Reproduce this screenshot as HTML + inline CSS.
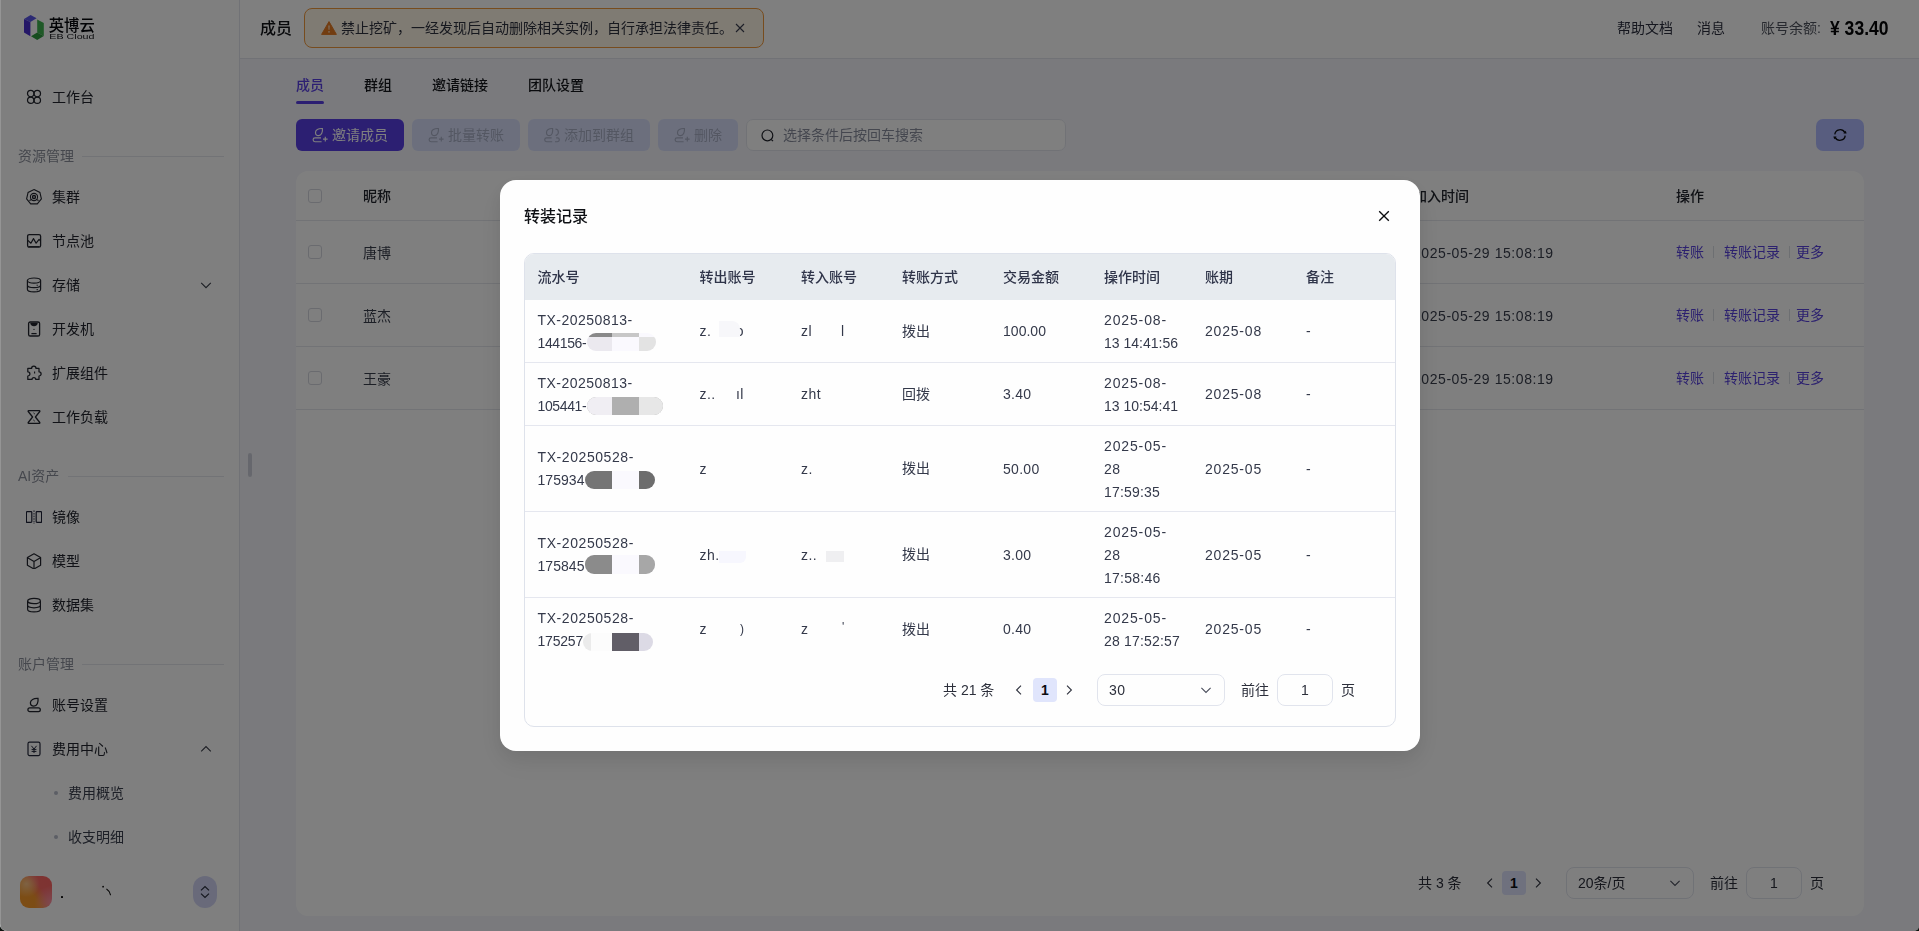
<!DOCTYPE html>
<html lang="zh-CN">
<head>
<meta charset="utf-8">
<title>成员</title>
<style>
*{box-sizing:border-box;margin:0;padding:0}
html{background:#0e130f}
html,body{width:1919px;height:931px;overflow:hidden}
body{background:#f4f5fa;border-radius:0 0 5px 7px}
body{font-family:"Liberation Sans","Noto Sans CJK SC",sans-serif;font-size:14px;color:#1d2129;position:relative}
.abs{position:absolute}
.ly{position:absolute;left:0;top:0;opacity:.999;white-space:nowrap}
#dlg{opacity:.999}
svg{display:block}
/* ---------- sidebar ---------- */
#side{position:absolute;left:0;top:0;width:240px;height:931px;background:#fff;border-right:1px solid #e3e5ec}
.mi{position:absolute;left:0;width:239px;height:40px;line-height:40px;font-size:14px;color:#23262f}
.mi .ic{position:absolute;left:26px;top:12px;width:16px;height:16px}
.mi .tx{position:absolute;left:52px;top:-.5px;white-space:nowrap}
.mi .ch{position:absolute;left:200px;top:14px;width:12px;height:12px}
.mi.sub .tx{left:68px;color:#3c4150}
.mi.sub i{position:absolute;left:54px;top:18px;width:4px;height:4px;border-radius:50%;background:#b9bdcc}
.grp{position:absolute;left:18px;height:20px;line-height:20px;font-size:14px;color:#8c909c;white-space:nowrap}
.grp b{position:absolute;top:10px;height:1px;background:#e6e8ee}
/* ---------- header ---------- */
#head{position:absolute;left:240px;top:0;width:1679px;height:59px;background:#fff;border-bottom:1px solid #e3e5ec}
/* ---------- main ---------- */
.tab{position:absolute;top:74px;height:22px;line-height:22px;font-size:14px;font-weight:500;color:#16181d;white-space:nowrap}
.btn{position:absolute;top:119px;height:32px;border-radius:6px;line-height:32px;font-size:14px;white-space:nowrap}
.btn svg{position:absolute;top:8px;width:16px;height:16px}
.btn span{position:absolute;top:0}
#card{position:absolute;left:296px;top:171px;width:1568px;height:745px;background:#fff;border-radius:12px}
.hl{position:absolute;left:0;width:1568px;height:1px;background:#e6e8ee}
.ck{position:absolute;left:12px;width:14px;height:14px;border:1px solid #d5d8e0;border-radius:3px;background:#fff}
.cell{position:absolute;white-space:nowrap;font-size:14px;height:22px;line-height:22px;color:#3a3f4d}
.lnk{color:#5a44e0}
.sep{position:absolute;width:1px;height:12px;background:#dcdfe6}
/* ---------- overlay & modal ---------- */
#mask{position:absolute;left:0;top:0;width:1919px;height:931px;background:rgba(0,0,0,.5)}
#dlg{position:absolute;left:500px;top:180px;width:920px;height:571px;background:#fff;border-radius:16px;box-shadow:0 12px 32px 4px rgba(0,0,0,.04),0 8px 20px rgba(0,0,0,.08)}
#tbl{position:absolute;left:24px;top:73px;width:872px;height:474px;border:1px solid #dfe3ec;border-radius:10px;overflow:hidden}
#tbl .th{position:absolute;left:0;top:0;width:870px;height:46px;background:#e8ecf0}
#tbl .th span{position:absolute;top:12px;height:22px;line-height:22px;font-size:14px;font-weight:500;color:#30354a;white-space:nowrap}
.r{position:absolute;left:0;width:870px;border-bottom:1px solid #e6e8f0}
.c{position:absolute;font-size:14px;line-height:23px;color:#353a4b;white-space:nowrap;letter-spacing:.45px;margin-top:1px}
.c.zh{letter-spacing:0;margin-top:0}
.blob{position:absolute}
</style>
</head>
<body>
<div id="side"><div class="ly">
<svg class="abs" style="left:0;top:0" width="120" height="56" viewBox="0 0 120 56">
<polygon points="24,19 30.6,15 36.6,18.2 30.4,22" fill="#5a56e8"/>
<polygon points="24,19 30.4,22 30.4,36.2 24,32.6" fill="#4a2fd0"/>
<polygon points="37.2,19.4 43.8,23 43.8,36 37.2,32.6" fill="#3fb34f"/>
<polygon points="31,36.2 37.2,32.6 43.8,36 37.2,40" fill="#2f9c3f"/>
<text transform="translate(48.800,31.200) scale(.935,1)" font-family="'Liberation Sans','Noto Sans CJK SC',sans-serif" font-size="16.400" font-weight="500" fill="#05070c">英博云</text>
<text transform="translate(49.300,39.100) scale(1.600,1)" font-family="'Liberation Sans',sans-serif" font-size="6.700" fill="#14161a">EB Cloud</text>
</svg>

<div class="mi" style="top:77px"><svg class="ic" viewBox="0 0 16 16" fill="none" stroke="#23262f" stroke-width="1.25"><circle cx="4.700" cy="4.600" r="3.200"/><circle cx="11.300" cy="4.600" r="3.200"/><circle cx="4.700" cy="11.200" r="3.200"/><circle cx="11.300" cy="11.200" r="3.200"/></svg><span class="tx">工作台</span></div>

<div class="grp" style="top:146px">资源管理<b style="left:64px;width:142px"></b></div>

<div class="mi" style="top:177px"><svg class="ic" viewBox="0 0 16 16" fill="none" stroke="#23262f" stroke-width="1.1"><polygon points="8,0.6 13.9,3.4 15.4,9.8 11.3,14.9 4.7,14.9 0.6,9.8 2.1,3.4"/><circle cx="8" cy="8" r="3.6"/><circle cx="8" cy="8" r="1.5" stroke-width="1.4"/><path d="M3.4 11.6 5.6 10.6M12.6 11.6 10.4 10.6"/></svg><span class="tx">集群</span></div>

<div class="mi" style="top:221px"><svg class="ic" viewBox="0 0 16 16" fill="none" stroke="#23262f" stroke-width="1.3"><rect x="1.6" y="1.6" width="13" height="12.6" rx="1.6"/><path d="M1.900 7.400 4.900 10.200 7.500 5.600 10.100 10.200 13.100 6.400 14.500 7.800" stroke-linejoin="round" stroke-width="1.200"/><path d="M2.600 13.600h10.800" stroke-width="1"/></svg><span class="tx">节点池</span></div>

<div class="mi" style="top:265px"><svg class="ic" viewBox="0 0 16 16" fill="none" stroke="#23262f" stroke-width="1.2"><ellipse cx="8" cy="3.6" rx="6.6" ry="2.6"/><path d="M1.4 3.6v8.6c0 1.5 2.9 2.7 6.6 2.7s6.600-1.200 6.600-2.700V3.600M1.400 8c0 1.500 2.900 2.700 6.600 2.700s6.600-1.200 6.600-2.700"/><path d="M10.600 8.200h1.200M10.600 12.600h1.200" stroke-width="1.1"/></svg><span class="tx">存储</span><svg class="ch" viewBox="0 0 12 12" fill="none" stroke="#3a3e4a" stroke-width="1.1"><path d="M1.200 3.800 6 8.600l4.800-4.800"/></svg></div>

<div class="mi" style="top:309px"><svg class="ic" viewBox="0 0 16 16" fill="none" stroke="#23262f" stroke-width="1.3"><rect x="2.600" y="1" width="11" height="14" rx="1.600"/><path d="M4.200 1.800h7.600c0 2.200-1.600 3.400-3.800 3.400S4.200 4 4.200 1.800z" fill="#23262f" stroke="none"/><path d="M5.400 12.600h5.200"/><circle cx="8" cy="8.400" r=".6" fill="#23262f" stroke="none"/></svg><span class="tx">开发机</span></div>

<div class="mi" style="top:353px"><svg class="ic" viewBox="0 0 16 16" fill="none" stroke="#23262f" stroke-width="1.25" stroke-linejoin="round"><path d="M5.600 3.400a2.200 2.200 0 1 1 4.400 0h3v3.400a2.100 2.100 0 1 1 0 4.200v3.400H9.800a1.900 1.900 0 1 0-3.800 0H1.800V11a2.100 2.100 0 1 0 0-4.200V3.400z"/><path d="M8.600 6.600v1.800" stroke-width="1.100"/></svg><span class="tx">扩展组件</span></div>

<div class="mi" style="top:397px"><svg class="ic" viewBox="0 0 16 16" fill="none" stroke="#23262f" stroke-width="1.25" stroke-linejoin="round"><path d="M2.600 1.600h10.800c.5 0 .7.500.4.900L9.400 8l4.400 5.500c.3.400.1.900-.4.900H2.600c-.5 0-.7-.5-.4-.9L6.600 8 2.200 2.500c-.3-.4-.1-.9.400-.9z"/><path d="M7.400 3.800 9 5.200M7.200 10.800l1.600 1.400" stroke-width=".8"/></svg><span class="tx">工作负载</span></div>

<div class="grp" style="top:466px">AI资产<b style="left:50px;width:156px"></b></div>

<div class="mi" style="top:497px"><svg class="ic" viewBox="0 0 16 16" fill="none" stroke="#1e2238" stroke-width="1.2"><rect x=".4" y="2.600" width="5.400" height="10.800" rx=".8"/><rect x="10.200" y="2.600" width="5.400" height="10.800" rx=".8"/><path d="M8 1.400v13.600" stroke-dasharray="1.600 1" stroke-width=".9"/></svg><span class="tx">镜像</span></div>

<div class="mi" style="top:541px"><svg class="ic" viewBox="0 0 16 16" fill="none" stroke="#23262f" stroke-width="1.2" stroke-linejoin="round"><path d="M8 .8 14.600 4.600v7.600L8 16 1.400 12.200V4.600z"/><path d="M1.600 4.800 8 8.400l6.400-3.600M8 8.400V15.800"/></svg><span class="tx">模型</span></div>

<div class="mi" style="top:585px"><svg class="ic" viewBox="0 0 16 16" fill="none" stroke="#23262f" stroke-width="1.2"><ellipse cx="8" cy="4" rx="6.400" ry="2.700"/><path d="M1.600 4v8.200c0 1.500 2.900 2.700 6.400 2.700s6.400-1.200 6.400-2.700V4M1.600 8.100c0 1.500 2.900 2.700 6.400 2.700s6.400-1.200 6.400-2.700"/></svg><span class="tx">数据集</span></div>

<div class="grp" style="top:654px">账户管理<b style="left:64px;width:142px"></b></div>

<div class="mi" style="top:685px"><svg class="ic" viewBox="0 0 16 16" fill="none" stroke="#23262f" stroke-width="1.300"><path d="M12 1.400C7.600 1.100 4.400 3 4.400 5.800c0 1.900 1.500 3.400 3.400 3.400 3.300 0 4.700-3.900 4.200-7.800z"/><rect x="1.900" y="10.900" width="12.400" height="3.700" rx="1.850"/></svg><span class="tx">账号设置</span></div>

<div class="mi" style="top:729px"><svg class="ic" viewBox="0 0 16 16" fill="none" stroke="#23283c" stroke-width="1.200"><rect x="2" y="1.200" width="12" height="13.400" rx="1.500"/><path d="M5.400 4.800 8 8l2.600-3.200M8 8v4M5.600 8.400h4.800M5.600 10.400h4.800" stroke-width="1"/></svg><span class="tx">费用中心</span><svg class="ch" viewBox="0 0 12 12" fill="none" stroke="#3a3e4a" stroke-width="1.100"><path d="M1.200 8.400 6 3.600l4.800 4.800"/></svg></div>

<div class="mi sub" style="top:773px"><i></i><span class="tx">费用概览</span></div>
<div class="mi sub" style="top:817px"><i></i><span class="tx">收支明细</span></div>

<div class="abs" style="left:20px;top:876px;width:32px;height:32px;border-radius:9px;background:radial-gradient(circle at 20% 25%,rgba(255,200,140,.95) 0,rgba(255,200,140,0) 38%),radial-gradient(circle at 100% 85%,rgba(255,150,170,.95) 0,rgba(255,150,170,0) 42%),linear-gradient(232deg,#ff6666 0%,#fd6a66 36%,#fa9a2c 60%,#fa9c2c 100%)"></div>
<div class="abs" style="left:193px;top:876px;width:24px;height:32px;border-radius:12px;background:#d3d6f6"><svg style="position:absolute;left:6px;top:9px" width="12" height="14" viewBox="0 0 12 14" fill="none" stroke="#2a2d3c" stroke-width="1.200"><path d="M2 5.400 6 1.600l4 3.800M2 8.600l4 3.800 4-3.800"/></svg></div>
<div class="abs" style="left:60.800px;top:896px;width:1.800px;height:1.800px;border-radius:.500px;background:#111"></div>
<svg class="abs" style="left:100px;top:884px" width="14" height="14" viewBox="0 0 14 14" fill="none" stroke="#111" stroke-width="1.100"><circle cx="3.100" cy="2.700" r=".900" fill="#111" stroke="none"/><path d="M6.800 5.200Q9.800 7 10.500 10.800" stroke-linecap="round"/></svg>
</div></div>
<div id="head"><div class="ly">
<div class="abs" style="left:20px;top:17px;font-size:16px;line-height:24px;font-weight:500;color:#111318">成员</div>
<div class="abs" style="left:64px;top:8px;width:460px;height:40px;border:1px solid #f0993e;border-radius:8px;background:#fff7e8">
<svg class="abs" style="left:16px;top:12px" width="16" height="14" viewBox="0 0 16 14"><path d="M8 .6 15.400 13.400H.6z" fill="#e67c24" stroke="#e67c24" stroke-width="1" stroke-linejoin="round"/><path d="M7.400 4.600h1.200l-.2 4.200h-.8zM7.300 10.200h1.400v1.400H7.300z" fill="#fff2e0"/></svg>
<span class="abs" style="left:36px;top:8px;line-height:22px;font-size:14px;color:#30333f;white-space:nowrap">禁止挖矿，一经发现后自动删除相关实例，自行承担法律责任。</span>
<svg class="abs" style="left:429px;top:13px" width="12" height="12" viewBox="0 0 12 12" fill="none" stroke="#3c4050" stroke-width="1.100"><path d="M2 2l8 8M10 2l-8 8"/></svg>
</div>
<span class="abs" style="left:1377px;top:17px;line-height:22px;color:#2d3040;white-space:nowrap">帮助文档</span>
<span class="abs" style="left:1457px;top:17px;line-height:22px;color:#2d3040;white-space:nowrap">消息</span>
<span class="abs" style="left:1521px;top:17px;line-height:22px;color:#50545f;white-space:nowrap">账号余额:</span>
<span class="abs" style="left:1589.500px;top:13px;line-height:30px;font-size:21px;font-weight:700;color:#050608;white-space:nowrap;transform:scaleX(.835);transform-origin:0 50%">¥ 33.40</span>
</div></div>
<div id="main" class="ly">
<div class="abs" style="left:248px;top:453px;width:4px;height:24px;border-radius:2px;background:#cdd0db"></div>
<span class="tab" style="left:296px;color:#5a40e6">成员</span>
<span class="tab" style="left:364px">群组</span>
<span class="tab" style="left:432px">邀请链接</span>
<span class="tab" style="left:528px">团队设置</span>
<div class="abs" style="left:296px;top:100.500px;width:28px;height:3px;border-radius:2px;background:#5a40e6"></div>

<div class="btn" style="left:296px;width:108px;background:#5a40e6;color:#fff"><svg style="left:16px" viewBox="0 0 16 16" fill="none" stroke="#fff" stroke-width="1.150"><path d="M10.400 1.500C6 1.300 3.500 2.900 3.500 5.400c0 1.800 1.400 3.200 3.100 3.200 3 0 4.200-3.600 3.800-7.100z"/><path d="M9 10.900H3a1.900 1.900 0 0 0 0 3.800h6.600M13.300 9.800v4.600M11 12.100h4.600"/></svg><span style="left:36px">邀请成员</span></div>
<div class="btn" style="left:412px;width:108px;background:#d9e0fc;color:#a9afc6"><svg style="left:16px" viewBox="0 0 16 16" fill="none" stroke="#a9afc6" stroke-width="1.150"><path d="M10.400 1.500C6 1.300 3.500 2.900 3.500 5.400c0 1.800 1.400 3.200 3.100 3.200 3 0 4.200-3.600 3.800-7.100z"/><path d="M9 10.900H3a1.900 1.900 0 0 0 0 3.800h6.600M13.300 9.800v4.600M11 12.100h4.600"/></svg><span style="left:36px">批量转账</span></div>
<div class="btn" style="left:528px;width:122px;background:#d9e0fc;color:#a9afc6"><svg style="left:16px" viewBox="0 0 16 16" fill="none" stroke="#a9afc6" stroke-width="1.150"><path d="M8.600 1.500C4.800 1.300 2.500 2.900 2.500 5.400c0 1.800 1.300 3.200 2.900 3.200 2.800 0 3.600-3.600 3.200-7.100z"/><path d="M7.600 10.900H2.600a1.900 1.900 0 0 0 0 3.800h5.600M11.400 2c2 .2 3 1.600 3 3.200S13.200 8.400 11.600 8.400M12.200 10.900h1.200a1.900 1.900 0 0 1 0 3.800h-2.400"/></svg><span style="left:36px">添加到群组</span></div>
<div class="btn" style="left:658px;width:80px;background:#d9e0fc;color:#a9afc6"><svg style="left:16px" viewBox="0 0 16 16" fill="none" stroke="#a9afc6" stroke-width="1.150"><path d="M10.400 1.500C6 1.300 3.500 2.900 3.500 5.400c0 1.800 1.400 3.200 3.100 3.200 3 0 4.200-3.600 3.800-7.100z"/><path d="M9 10.900H3a1.900 1.900 0 0 0 0 3.800h6.600M13.300 9.800v4.600M11 12.100h4.600"/></svg><span style="left:36px">删除</span></div>
<div class="abs" style="left:746px;top:119px;width:320px;height:32px;border-radius:7px;background:#fff;border:1px solid #e4e6ee"><svg class="abs" style="left:13px;top:8px" width="16" height="16" viewBox="0 0 16 16" fill="none" stroke="#20232c" stroke-width="1.200"><circle cx="7.400" cy="7.400" r="5.400"/><path d="M11.400 11.600l1.600 1.600"/></svg><span class="abs" style="left:36px;top:4px;line-height:22px;color:#8b90a0;white-space:nowrap">选择条件后按回车搜索</span></div>
<div class="abs" style="left:1816px;top:119px;width:48px;height:32px;border-radius:7px;background:#b1bbff"><svg class="abs" style="left:16px;top:8px" width="16" height="16" viewBox="0 0 16 16" fill="none" stroke="#0c0d12" stroke-width="1.300"><path d="M2.800 7.400A5.300 5.300 0 0 1 12.800 5.600M13.200 8.600A5.300 5.300 0 0 1 3.200 10.400"/><path d="M11.400 6.600h3.200L13.800 3.800zM4.600 9.400H1.400l.8 2.800z" fill="#0c0d12" stroke="none"/></svg></div>

<div id="card"><div class="ly">
<div class="hl" style="top:49px"></div><div class="hl" style="top:112px"></div><div class="hl" style="top:175px"></div><div class="hl" style="top:238px"></div>
<div class="ck" style="top:18px"></div><div class="ck" style="top:74px"></div><div class="ck" style="top:137px"></div><div class="ck" style="top:200px"></div>
<span class="cell" style="left:67px;top:14px;font-weight:500;color:#22252e">昵称</span>
<span class="cell" style="left:67px;top:71px">唐博</span>
<span class="cell" style="left:67px;top:134px">蓝杰</span>
<span class="cell" style="left:67px;top:197px">王豪</span>
<span class="cell" style="left:1117px;top:14px;font-weight:500;color:#22252e">加入时间</span>
<span class="cell tm" style="letter-spacing:0.56px;left:1117px;top:71px">2025-05-29 15:08:19</span>
<span class="cell tm" style="letter-spacing:0.56px;left:1117px;top:134px">2025-05-29 15:08:19</span>
<span class="cell tm" style="letter-spacing:0.56px;left:1117px;top:197px">2025-05-29 15:08:19</span>
<span class="cell" style="left:1380px;top:14px;font-weight:500;color:#22252e">操作</span>
<span class="cell lnk" style="left:1380px;top:70px">转账</span><i class="sep" style="left:1417px;top:75px"></i><span class="cell lnk" style="left:1428px;top:70px">转账记录</span><i class="sep" style="left:1493px;top:75px"></i><span class="cell lnk" style="left:1500px;top:70px">更多</span>
<span class="cell lnk" style="left:1380px;top:133px">转账</span><i class="sep" style="left:1417px;top:138px"></i><span class="cell lnk" style="left:1428px;top:133px">转账记录</span><i class="sep" style="left:1493px;top:138px"></i><span class="cell lnk" style="left:1500px;top:133px">更多</span>
<span class="cell lnk" style="left:1380px;top:196px">转账</span><i class="sep" style="left:1417px;top:201px"></i><span class="cell lnk" style="left:1428px;top:196px">转账记录</span><i class="sep" style="left:1493px;top:201px"></i><span class="cell lnk" style="left:1500px;top:196px">更多</span>

<span class="cell" style="left:1122px;top:701px;color:#2d303c">共 3 条</span>
<svg class="abs" style="left:1188px;top:706px" width="12" height="12" viewBox="0 0 12 12" fill="none" stroke="#30333f" stroke-width="1.100"><path d="M8 1.600 3.600 6 8 10.400"/></svg>
<div class="abs" style="left:1206px;top:700px;width:24px;height:24px;border-radius:4px;background:#dfe4fd;text-align:center;line-height:24px;font-weight:700;color:#0c0d12">1</div>
<svg class="abs" style="left:1236px;top:706px" width="12" height="12" viewBox="0 0 12 12" fill="none" stroke="#30333f" stroke-width="1.100"><path d="M4 1.600 8.400 6 4 10.400"/></svg>
<div class="abs" style="left:1270px;top:696px;width:128px;height:32px;border:1px solid #e2e5ee;border-radius:8px"><span class="abs" style="left:11px;top:4px;line-height:22px;color:#2d303c;white-space:nowrap">20条/页</span><svg class="abs" style="left:102px;top:9px" width="12" height="12" viewBox="0 0 12 12" fill="none" stroke="#4a4e5c" stroke-width="1.100"><path d="M1.400 3.800 6 8.400l4.600-4.600"/></svg></div>
<span class="cell" style="left:1414px;top:701px;color:#2d303c">前往</span>
<div class="abs" style="left:1450px;top:696px;width:56px;height:32px;border:1px solid #e2e5ee;border-radius:8px;text-align:center;line-height:31px;color:#2d303c">1</div>
<span class="cell" style="left:1514px;top:701px;color:#2d303c">页</span>
</div></div>
</div>
<div id="mask"></div><div class="abs" style="left:0;top:0;width:1px;height:931px;background:rgba(255,255,255,.17)"></div>
<div id="dlg">
<div class="abs" style="left:24px;top:25px;font-size:16px;line-height:24px;font-weight:500;color:#0f1115;white-space:nowrap">转装记录</div>
<svg class="abs" style="left:878px;top:30px" width="12" height="12" viewBox="0 0 12 12" fill="none" stroke="#0c0d10" stroke-width="1.350"><path d="M1.200 1.200l9.600 9.600M10.800 1.200l-9.600 9.600"/></svg>
<div id="tbl">
<div class="th"><span style="left:12.500px">流水号</span><span style="left:174.500px">转出账号</span><span style="left:276px">转入账号</span><span style="left:377px">转账方式</span><span style="left:478px">交易金额</span><span style="left:579px">操作时间</span><span style="left:680px">账期</span><span style="left:781px">备注</span></div>

<div class="r" style="top:46px;height:63px">
<span class="c" style="left:12.500px;top:8px"><span class="w" style="letter-spacing:0.46px">TX-20250813-</span><br><span class="w" style="letter-spacing:-0.37px">144156-</span></span>
<span class="c" style="left:174.500px;top:18.500px">z.</span><span class="c" style="left:213px;top:18.500px;width:6px;overflow:hidden;direction:rtl">o</span>
<span class="c" style="left:276px;top:18.500px">zl</span><span class="c" style="left:316px;top:18.500px">l</span>
<span class="c zh" style="left:377px;top:19.500px">拨出</span>
<span class="c" style="left:478px;top:18.500px"><span class="w" style="letter-spacing:0.03px">100.00</span></span>
<span class="c" style="left:579px;top:8px"><span class="w" style="letter-spacing:0.87px">2025-08-</span><br><span class="w" style="letter-spacing:0.00px">13 14:41:56</span></span>
<span class="c" style="left:680px;top:18.500px"><span class="w" style="letter-spacing:0.80px">2025-08</span></span>
<span class="c" style="left:781px;top:18.500px">-</span>
<div class="blob" style="left:62px;top:33px;width:69px;height:18px;border-radius:9px;overflow:hidden;background:#fbfaff"><i class="abs" style="left:0;top:0;width:25px;height:18px;background:#eceaf0"></i><i class="abs" style="left:0;top:0;width:25px;height:4px;background:#8a8a8a"></i><i class="abs" style="left:25px;top:0;width:27px;height:4px;background:#c8c8c8"></i><i class="abs" style="left:52px;top:4px;width:17px;height:14px;background:#e4e4e4"></i></div>
<div class="blob" style="left:194px;top:21px;width:21px;height:16px;background:#f8f8fb;border-radius:0 8px 0 0"></div>
</div>

<div class="r" style="top:109px;height:63px">
<span class="c" style="left:12.500px;top:8px"><span class="w" style="letter-spacing:0.46px">TX-20250813-</span><br><span class="w" style="letter-spacing:-0.37px">105441-</span></span>
<span class="c" style="left:174.500px;top:18.500px">z..</span><span class="c" style="left:211px;top:18.500px">ıl</span>
<span class="c" style="left:276px;top:18.500px">zht</span>
<span class="c zh" style="left:377px;top:19.500px">回拨</span>
<span class="c" style="left:478px;top:18.500px"><span class="w" style="letter-spacing:0.29px">3.40</span></span>
<span class="c" style="left:579px;top:8px"><span class="w" style="letter-spacing:0.87px">2025-08-</span><br><span class="w" style="letter-spacing:0.00px">13 10:54:41</span></span>
<span class="c" style="left:680px;top:18.500px"><span class="w" style="letter-spacing:0.80px">2025-08</span></span>
<span class="c" style="left:781px;top:18.500px">-</span>
<div class="blob" style="left:62px;top:34px;width:76px;height:18px;border-radius:9px;overflow:hidden;background:#b0b0b0"><i class="abs" style="left:0;top:0;width:25px;height:18px;background:#f1eff4"></i><i class="abs" style="left:52px;top:0;width:24px;height:18px;background:#e8e8e8"></i></div>
</div>

<div class="r" style="top:172px;height:86px">
<span class="c" style="left:12.500px;top:19px"><span class="w" style="letter-spacing:0.58px">TX-20250528-</span><br><span class="w" style="letter-spacing:0.05px">175934</span></span>
<span class="c" style="left:174.500px;top:30.500px">z</span>
<span class="c" style="left:276px;top:30.500px">z.</span>
<span class="c zh" style="left:377px;top:31px">拨出</span>
<span class="c" style="left:478px;top:30.500px"><span class="w" style="letter-spacing:0.29px">50.00</span></span>
<span class="c" style="left:579px;top:8px"><span class="w" style="letter-spacing:0.87px">2025-05-</span><br><span class="w" style="letter-spacing:0.46px">28</span><br><span class="w" style="letter-spacing:0.19px">17:59:35</span></span>
<span class="c" style="left:680px;top:30.500px"><span class="w" style="letter-spacing:0.80px">2025-05</span></span>
<span class="c" style="left:781px;top:30.500px">-</span>
<div class="blob" style="left:60px;top:45px;width:70px;height:18px;border-radius:9px;overflow:hidden;background:#fbfaff"><i class="abs" style="left:0;top:0;width:27px;height:18px;background:#767676"></i><i class="abs" style="left:54px;top:0;width:16px;height:18px;background:#6e6e6e"></i></div>
</div>

<div class="r" style="top:258px;height:86px">
<span class="c" style="left:12.500px;top:19px"><span class="w" style="letter-spacing:0.58px">TX-20250528-</span><br><span class="w" style="letter-spacing:0.05px">175845</span></span>
<span class="c" style="left:174.500px;top:30.500px">zh.</span>
<span class="c" style="left:276px;top:30.500px">z..</span>
<span class="c zh" style="left:377px;top:31px">拨出</span>
<span class="c" style="left:478px;top:30.500px"><span class="w" style="letter-spacing:0.29px">3.00</span></span>
<span class="c" style="left:579px;top:8px"><span class="w" style="letter-spacing:0.87px">2025-05-</span><br><span class="w" style="letter-spacing:0.46px">28</span><br><span class="w" style="letter-spacing:0.25px">17:58:46</span></span>
<span class="c" style="left:680px;top:30.500px"><span class="w" style="letter-spacing:0.80px">2025-05</span></span>
<span class="c" style="left:781px;top:30.500px">-</span>
<div class="blob" style="left:60px;top:43px;width:70px;height:19px;border-radius:9px;overflow:hidden;background:#fbfaff"><i class="abs" style="left:0;top:0;width:27px;height:19px;background:#8c8c8c"></i><i class="abs" style="left:54px;top:0;width:16px;height:19px;background:#a8a8a8"></i></div>
<div class="blob" style="left:194px;top:39px;width:27px;height:12px;background:#f8f8ff;border-radius:0 0 6px 0"></div>
<div class="blob" style="left:301px;top:39px;width:18px;height:11px;background:#f0f0f2"></div>
</div>

<div class="r" style="top:344px;height:63px;border-bottom:0">
<span class="c" style="left:12.500px;top:8px"><span class="w" style="letter-spacing:0.58px">TX-20250528-</span><br><span class="w" style="letter-spacing:-0.20px">175257</span></span>
<span class="c" style="left:174.500px;top:18.500px">z</span><span class="c" style="left:215px;top:18.500px;font-size:12px">)</span>
<span class="c" style="left:276px;top:18.500px">z</span><span class="c" style="left:317px;top:17px;font-size:12px">'</span>
<span class="c zh" style="left:377px;top:19.500px">拨出</span>
<span class="c" style="left:478px;top:18.500px"><span class="w" style="letter-spacing:0.29px">0.40</span></span>
<span class="c" style="left:579px;top:8px"><span class="w" style="letter-spacing:0.87px">2025-05-</span><br><span class="w" style="letter-spacing:0.18px">28 17:52:57</span></span>
<span class="c" style="left:680px;top:18.500px"><span class="w" style="letter-spacing:0.80px">2025-05</span></span>
<span class="c" style="left:781px;top:18.500px">-</span>
<div class="blob" style="left:58px;top:35px;width:70px;height:18px;border-radius:9px;overflow:hidden;background:#fdfdfd"><i class="abs" style="left:0;top:0;width:8px;height:18px;background:#ececec"></i><i class="abs" style="left:29px;top:0;width:27px;height:18px;background:#625f68"></i><i class="abs" style="left:56px;top:0;width:14px;height:18px;background:#dddbe6"></i></div>
</div>

<span class="c zh" style="left:418px;top:424.500px;color:#2d303c">共 21 条</span>
<svg class="abs" style="left:488px;top:430px" width="12" height="12" viewBox="0 0 12 12" fill="none" stroke="#30333f" stroke-width="1.100"><path d="M8 1.600 3.600 6 8 10.400"/></svg>
<div class="abs" style="left:508px;top:424px;width:24px;height:24px;border-radius:4px;background:#e1e6fd;text-align:center;line-height:24px;font-weight:700;color:#0c0d12">1</div>
<svg class="abs" style="left:538px;top:430px" width="12" height="12" viewBox="0 0 12 12" fill="none" stroke="#30333f" stroke-width="1.100"><path d="M4 1.600 8.400 6 4 10.400"/></svg>
<div class="abs" style="left:572px;top:420px;width:128px;height:32px;border:1px solid #e2e5ee;border-radius:8px"><span class="abs" style="left:11px;top:4px;line-height:22px;color:#2d303c;white-space:nowrap;letter-spacing:.500px">30</span><svg class="abs" style="left:102px;top:9px" width="12" height="12" viewBox="0 0 12 12" fill="none" stroke="#4a4e5c" stroke-width="1.100"><path d="M1.400 3.800 6 8.400l4.600-4.600"/></svg></div>
<span class="c zh" style="left:716px;top:424.500px;color:#2d303c">前往</span>
<div class="abs" style="left:752px;top:420px;width:56px;height:32px;border:1px solid #e2e5ee;border-radius:8px;text-align:center;line-height:31px;color:#2d303c">1</div>
<span class="c zh" style="left:816px;top:424.500px;color:#2d303c">页</span>
</div>
</div>
</body>
</html>
